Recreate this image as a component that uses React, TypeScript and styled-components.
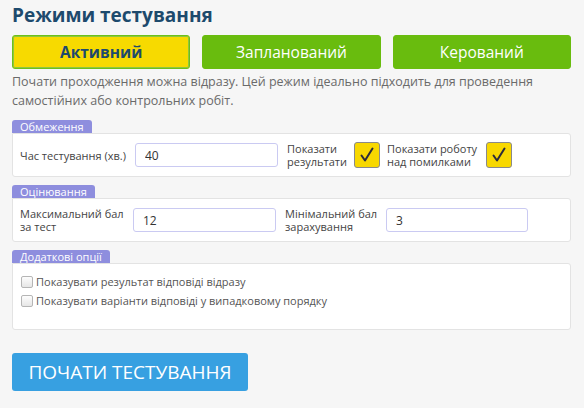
import React from "react";
import styled, { createGlobalStyle } from "styled-components";

const Global = createGlobalStyle`
  html, body { margin: 0; padding: 0; background: #f6f6f6; }
  body { font-family: "Open Sans", "Liberation Sans", sans-serif; }
  * { box-sizing: border-box; }
`;

const Page = styled.div`
  width: 584px;
  height: 408px;
  padding: 0 13px 0 12px;
  background: #f6f6f6;
  display: flex;
  flex-direction: column;
`;

const Title = styled.h1`
  margin: 0;
  padding-top: 2px;
  height: 35px;
  font-size: 19px;
  line-height: 26px;
  font-weight: 700;
  color: #1d4a6d;
`;

const ModeRow = styled.div`
  display: flex;
  gap: 12px;
`;

const ModeButton = styled.button<{ $active?: boolean }>`
  flex: 1;
  height: 34px;
  border-radius: 3px;
  border: 1px solid ${(p) => (p.$active ? "#6cc01a" : "#69bc0e")};
  background: ${(p) => (p.$active ? "#f7da00" : "#69bc0e")};
  color: ${(p) => (p.$active ? "#1d4a6d" : "#ffffff")};
  font-family: "Open Sans", "Liberation Sans", sans-serif;
  font-size: 15.5px;
  font-weight: ${(p) => (p.$active ? 700 : 400)};
  padding: 0;
  ${(p) => (p.$active ? "box-shadow: inset 0 0 0 1px #8dc63f;" : "")}
`;

const Description = styled.p`
  margin: 3px 0 0;
  font-size: 12.5px;
  line-height: 19px;
  color: #6a6a6a;
`;

const Section = styled.section<{ $top: number }>`
  margin-top: ${(p) => p.$top}px;
  display: flex;
  flex-direction: column;
  align-items: flex-start;
`;

const Legend = styled.div`
  background: #8e8ede;
  color: #ffffff;
  font-size: 11px;
  line-height: 13px;
  height: 13px;
  padding: 0 8px;
  border-radius: 3px 3px 0 0;
`;

const Box = styled.div<{ $h: number; $column?: boolean }>`
  width: 100%;
  height: ${(p) => p.$h}px;
  background: #ffffff;
  border: 1px solid #e3e3e3;
  border-radius: 0 3px 3px 3px;
  display: flex;
  flex-direction: ${(p) => (p.$column ? "column" : "row")};
  align-items: ${(p) => (p.$column ? "flex-start" : "center")};
  padding: ${(p) => (p.$column ? "8px 8px" : "0 7px")};
`;

const Label = styled.label<{ $w: number; $ml?: number }>`
  width: ${(p) => p.$w}px;
  margin-left: ${(p) => p.$ml ?? 0}px;
  flex-shrink: 0;
  font-size: 11px;
  line-height: 13px;
  color: #444;
`;

const TextInput = styled.input<{ $w: number }>`
  width: ${(p) => p.$w}px;
  height: 24px;
  flex-shrink: 0;
  border: 1px solid #cacaf2;
  border-radius: 3px;
  padding: 0 9px;
  font-family: "Open Sans", "Liberation Sans", sans-serif;
  font-size: 12px;
  color: #333;
  background: #fff;
  outline: none;
`;

const BigCheck = styled.span`
  width: 26px;
  height: 26px;
  flex-shrink: 0;
  background: #f8d800;
  border: 1px solid #8a8a8a;
  border-radius: 3px;
  display: flex;
  align-items: center;
  justify-content: center;
`;

const OptionRow = styled.label`
  display: flex;
  align-items: center;
  gap: 3px;
  font-size: 11px;
  line-height: 19px;
  color: #555;
`;

const SmallCheck = styled.span`
  width: 12px;
  height: 12px;
  border: 1px solid #b5b5b5;
  border-radius: 2px;
  background: linear-gradient(#fdfdfd, #e6e6e6);
`;

const StartButton = styled.button`
  margin-top: 23px;
  width: 236px;
  height: 38px;
  border: none;
  border-radius: 3px;
  background: #37a0e1;
  color: #ffffff;
  font-family: "Open Sans", "Liberation Sans", sans-serif;
  font-size: 19px;
  padding: 0;
`;

const Tick = () => (
  <svg width="18" height="18" viewBox="0 0 18 18">
    <path d="M3.5 9.5 L7 14.5 L14.5 2.5" fill="none" stroke="#2c2c3a" strokeWidth="2" strokeLinecap="round" strokeLinejoin="round" />
  </svg>
);

export default function App() {
  return (
    <Page>
      <Global />
      <Title>Режими тестування</Title>
      <ModeRow>
        <ModeButton $active>Активний</ModeButton>
        <ModeButton>Запланований</ModeButton>
        <ModeButton>Керований</ModeButton>
      </ModeRow>
      <Description>
        Почати проходження можна відразу. Цей режим ідеально підходить для проведення
        самостійних або контрольних робіт.
      </Description>

      <Section $top={10}>
        <Legend>Обмеження</Legend>
        <Box $h={44}>
          <Label $w={115}>Час тестування (хв.)</Label>
          <TextInput $w={143} defaultValue="40" />
          <Label $w={67} $ml={9}>Показати результати</Label>
          <BigCheck><Tick /></BigCheck>
          <Label $w={99} $ml={7}>Показати роботу над помилками</Label>
          <BigCheck><Tick /></BigCheck>
        </Box>
      </Section>

      <Section $top={8}>
        <Legend>Оцінювання</Legend>
        <Box $h={44}>
          <Label $w={113}>Максимальний бал за тест</Label>
          <TextInput $w={143} defaultValue="12" />
          <Label $w={101} $ml={9}>Мінімальний бал зарахування</Label>
          <TextInput $w={142} defaultValue="3" />
        </Box>
      </Section>

      <Section $top={8}>
        <Legend>Додаткові опції</Legend>
        <Box $h={67} $column>
          <OptionRow><SmallCheck />Показувати результат відповіді відразу</OptionRow>
          <OptionRow><SmallCheck />Показувати варіанти відповіді у випадковому порядку</OptionRow>
        </Box>
      </Section>

      <StartButton>ПОЧАТИ ТЕСТУВАННЯ</StartButton>
    </Page>
  );
}
